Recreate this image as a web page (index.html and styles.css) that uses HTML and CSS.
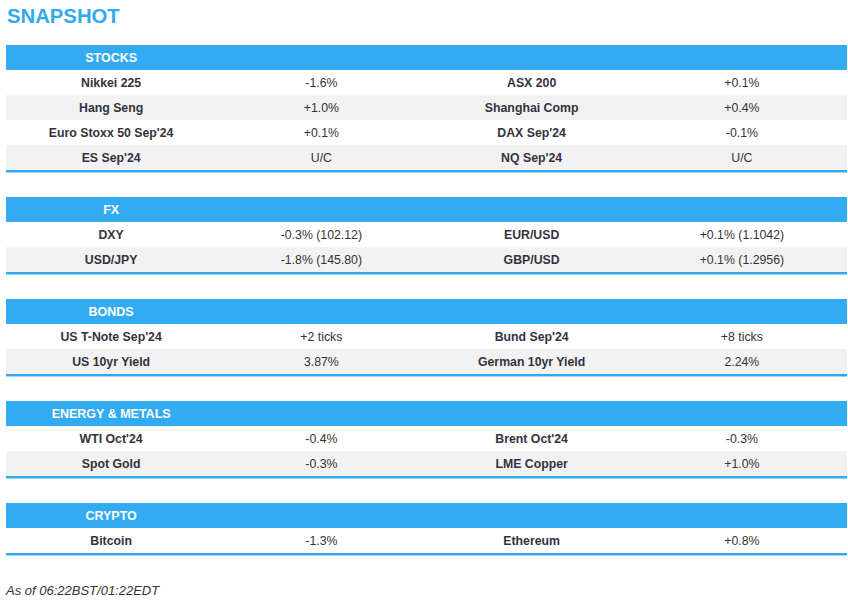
FILE: index.html
```html
<!DOCTYPE html>
<html>
<head>
<meta charset="utf-8">
<link rel="stylesheet" href="styles.css">
</head>
<body>
<div class="page">
  <h1 class="title">SNAPSHOT</h1>
  <div class="sections">
    <section class="block">
      <div class="row head"><div class="cell">STOCKS</div></div>
      <div class="row"><div class="cell name">Nikkei 225</div><div class="cell">-1.6%</div><div class="cell name">ASX 200</div><div class="cell">+0.1%</div></div>
      <div class="row alt"><div class="cell name">Hang Seng</div><div class="cell">+1.0%</div><div class="cell name">Shanghai Comp</div><div class="cell">+0.4%</div></div>
      <div class="row"><div class="cell name">Euro Stoxx 50 Sep'24</div><div class="cell">+0.1%</div><div class="cell name">DAX Sep'24</div><div class="cell">-0.1%</div></div>
      <div class="row alt"><div class="cell name">ES Sep'24</div><div class="cell">U/C</div><div class="cell name">NQ Sep'24</div><div class="cell">U/C</div></div>
    </section>
    <section class="block">
      <div class="row head"><div class="cell">FX</div></div>
      <div class="row"><div class="cell name">DXY</div><div class="cell">-0.3% (102.12)</div><div class="cell name">EUR/USD</div><div class="cell">+0.1% (1.1042)</div></div>
      <div class="row alt"><div class="cell name">USD/JPY</div><div class="cell">-1.8% (145.80)</div><div class="cell name">GBP/USD</div><div class="cell">+0.1% (1.2956)</div></div>
    </section>
    <section class="block">
      <div class="row head"><div class="cell">BONDS</div></div>
      <div class="row"><div class="cell name">US T-Note Sep'24</div><div class="cell">+2 ticks</div><div class="cell name">Bund Sep'24</div><div class="cell">+8 ticks</div></div>
      <div class="row alt"><div class="cell name">US 10yr Yield</div><div class="cell">3.87%</div><div class="cell name">German 10yr Yield</div><div class="cell">2.24%</div></div>
    </section>
    <section class="block">
      <div class="row head"><div class="cell">ENERGY &amp; METALS</div></div>
      <div class="row"><div class="cell name">WTI Oct'24</div><div class="cell">-0.4%</div><div class="cell name">Brent Oct'24</div><div class="cell">-0.3%</div></div>
      <div class="row alt"><div class="cell name">Spot Gold</div><div class="cell">-0.3%</div><div class="cell name">LME Copper</div><div class="cell">+1.0%</div></div>
    </section>
    <section class="block">
      <div class="row head"><div class="cell">CRYPTO</div></div>
      <div class="row"><div class="cell name">Bitcoin</div><div class="cell">-1.3%</div><div class="cell name">Ethereum</div><div class="cell">+0.8%</div></div>
    </section>
  </div>
  <p class="stamp">As of 06:22BST/01:22EDT</p>
</div>
</body>
</html>
```
FILE: styles.css
```css
html, body {
  margin: 0;
  padding: 0;
  background: #ffffff;
}
body {
  font-family: "Liberation Sans", Arial, sans-serif;
  color: #333333;
}
.page {
  padding: 5px 1px 0 6px;
}
.title {
  margin: 0;
  font-size: 20.3px;
  line-height: 23px;
  font-weight: bold;
  color: #31a9f1;
  padding-left: 1px;
}
.sections {
  margin-top: 17px;
  display: flex;
  flex-direction: column;
  gap: 25px;
}
.block {
  border-bottom: 2px solid #2ea8f0;
  box-shadow: 0 1px 0 #9dd6f9;
}
.row {
  display: grid;
  grid-template-columns: repeat(4, 1fr);
  height: 25px;
  align-items: center;
  font-size: 12.3px;
}
.row.alt {
  background: #f2f2f2;
}
.row.head {
  background: #32abf2;
  color: #ffffff;
  font-weight: bold;
  font-size: 12.5px;
}
.cell {
  text-align: center;
  white-space: nowrap;
}
.name {
  font-weight: bold;
  color: #33333f;
}
.stamp {
  margin: 28px 0 0 0;
  font-size: 13px;
  line-height: 16px;
  font-style: italic;
  color: #333333;
}
```
